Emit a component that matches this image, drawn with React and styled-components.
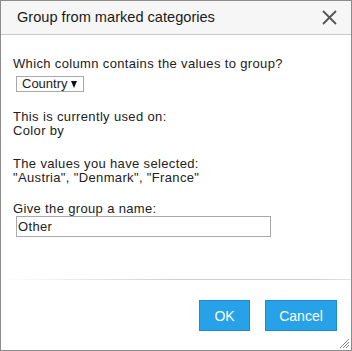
import React from "react";
import styled, { createGlobalStyle } from "styled-components";

const GlobalStyle = createGlobalStyle`
  html, body {
    margin: 0;
    padding: 0;
    background: #ffffff;
  }
  * {
    box-sizing: border-box;
  }
`;

const Dialog = styled.div`
  width: 352px;
  height: 351px;
  display: flex;
  flex-direction: column;
  border: 1px solid #8c8c8c;
  background: #ffffff;
  font-family: "Liberation Sans", Arial, sans-serif;
  color: #222222;
  position: relative;
  overflow: hidden;
`;

const Header = styled.div`
  height: 34px;
  flex-shrink: 0;
  display: flex;
  align-items: center;
  justify-content: space-between;
  padding: 0 14px 0 16px;
  background: #f6f6f6;
  border-bottom: 1px solid #c8c8c8;
`;

const Title = styled.div`
  font-size: 14.6px;
  color: #1a1a1a;
  margin-top: -1px;
`;

const CloseButton = styled.button`
  width: 16px;
  height: 16px;
  padding: 0;
  border: none;
  background: none;
  display: flex;
  align-items: center;
  justify-content: center;
  cursor: pointer;
`;

const Body = styled.div`
  flex: 1;
  padding: 22px 12px 0 12px;
  font-size: 13px;
  line-height: 14px;
  letter-spacing: 0.35px;
`;

const Text = styled.div`
  margin-top: ${(p) => p.gap || 0}px;
`;

const Select = styled.div`
  display: inline-flex;
  align-items: center;
  justify-content: space-between;
  width: 68px;
  height: 16px;
  margin: 5px 0 0 3px;
  padding: 0 6px 0 5px;
  border: 1px solid #a9a9a9;
  background: #ffffff;
  font-size: 13px;
  line-height: 14px;
  letter-spacing: 0;
`;

const Arrow = styled.span`
  width: 0;
  height: 0;
  border-left: 3.5px solid transparent;
  border-right: 3.5px solid transparent;
  border-top: 7px solid #111;
  margin-top: 1px;
`;

const NameInput = styled.input`
  display: block;
  width: 255px;
  height: 21px;
  margin: 0 0 0 3px;
  padding: 0 2px 0 1px;
  border: 1px solid #a9a9a9;
  font-family: "Liberation Sans", Arial, sans-serif;
  font-size: 13px;
  letter-spacing: 0.35px;
  color: #222222;
  outline: none;
`;

const Separator = styled.div`
  height: 1px;
  flex-shrink: 0;
  background: linear-gradient(to right, #ffffff 0%, #cfcfcf 50%, #cfcfcf 90%, #e6e6e6 100%);
`;

const Footer = styled.div`
  height: 70px;
  flex-shrink: 0;
  display: flex;
  justify-content: flex-end;
  align-items: flex-start;
  gap: 15px;
  padding: 20px 14px 0 0;
`;

const Button = styled.button`
  height: 31px;
  width: ${(p) => p.w}px;
  border: 1px solid #1b8ad0;
  background: #27a1e8;
  color: #ffffff;
  font-family: "Liberation Sans", Arial, sans-serif;
  font-size: 14px;
  padding: 0;
  cursor: pointer;
`;

const Grip = styled.svg`
  position: absolute;
  right: 1px;
  bottom: 1px;
`;

export default function App() {
  return (
    <>
      <GlobalStyle />
      <Dialog>
        <Header>
          <Title>Group from marked categories</Title>
          <CloseButton aria-label="Close">
            <svg width="15" height="15" viewBox="0 0 15 15">
              <path d="M1 1 L14 14 M14 1 L1 14" stroke="#555" strokeWidth="1.8" fill="none" />
            </svg>
          </CloseButton>
        </Header>
        <Body>
          <Text>Which column contains the values to group?</Text>
          <Select>
            <span>Country</span>
            <Arrow />
          </Select>
          <Text gap={18}>This is currently used on:</Text>
          <Text>Color by</Text>
          <Text gap={19}>The values you have selected:</Text>
          <Text>"Austria", "Denmark", "France"</Text>
          <Text gap={17}>Give the group a name:</Text>
          <NameInput defaultValue="Other" />
        </Body>
        <Separator />
        <Footer>
          <Button w={51}>OK</Button>
          <Button w={72}>Cancel</Button>
        </Footer>
        <Grip width="12" height="12" viewBox="0 0 12 12">
          <path d="M11 2 L2 11 M11 5 L5 11 M11 8 L8 11" stroke="#888" strokeWidth="1" fill="none" />
        </Grip>
      </Dialog>
    </>
  );
}
